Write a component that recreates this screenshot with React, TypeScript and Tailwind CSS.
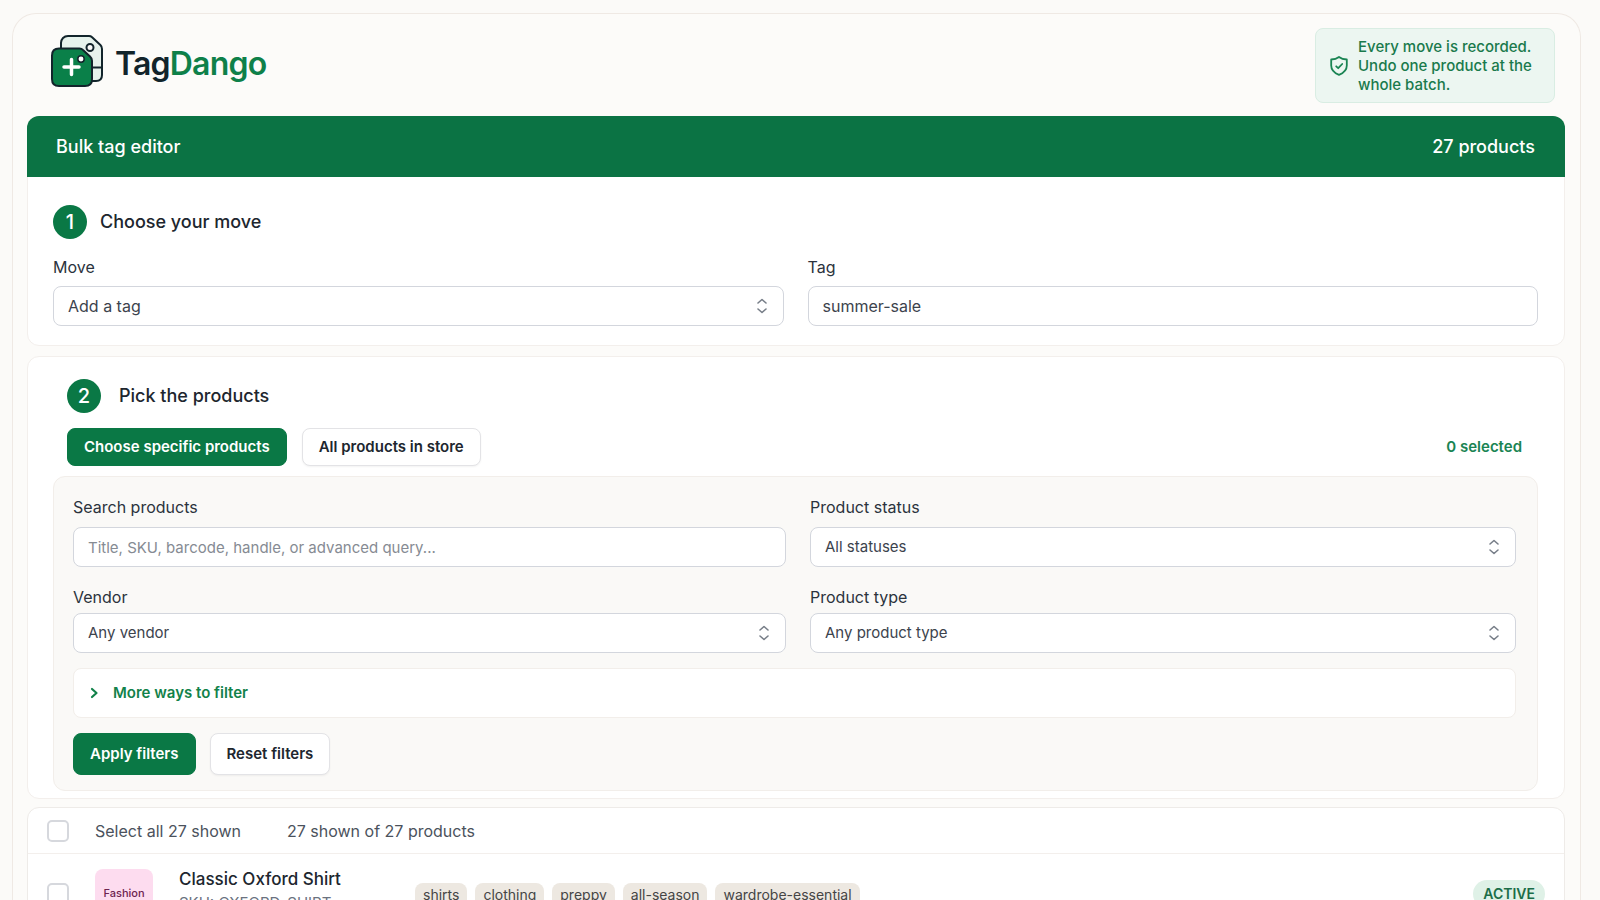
import type { InputHTMLAttributes, ReactNode, SelectHTMLAttributes } from "react"
import clsx from "clsx"

type Product = {
	title: string
	sku: string
	category: string
	tags: string[]
	status: string
}

const products: Product[] = [
	{
		title: "Classic Oxford Shirt",
		sku: "OXFORD-SHIRT",
		category: "Fashion",
		tags: ["shirts", "clothing", "preppy", "all-season", "wardrobe-essential"],
		status: "ACTIVE",
	},
]

function Logo() {
	return (
		<svg width="52" height="52" viewBox="0 0 52 52" fill="none" stroke="#12242b" strokeWidth="2" strokeLinejoin="round" aria-hidden="true">
			<path d="M17 1h21c1.200 0 2.200.4 3.100 1.200l8.300 7.800c1.100 1 1.600 2.200 1.600 4V40c0 4-2.500 6-6 6H16c-4 0-6-2-6-6V8c0-4 3-7 7-7z" fill="#e6f2ec" />
			<path d="M41 32.500h10" />
			<circle cx="39" cy="12.500" r="3.500" fill="#fbfaf8" />
			<path d="M8 13.500h20.500c1.500 0 2.500.4 3.500 1.400l7 6.600c1.300 1.200 2 2.500 2 4.200V44c0 4.500-2.500 7-7 7H8c-4.500 0-7-2.500-7-7V20.500c0-4.500 2.500-7 7-7z" fill="#0a8049" />
			<circle cx="30" cy="24" r="3.200" fill="#fff" strokeWidth="1.500" />
			<path d="M20.500 24.500v15M13 32h15" stroke="#fff" strokeWidth="3.500" strokeLinecap="round" />
		</svg>
	)
}

function ShieldIcon() {
	return (
		<svg className="shrink-0" width="18" height="20" viewBox="0 0 18 20" fill="none" stroke="#1a8453" strokeWidth="1.800" strokeLinecap="round" strokeLinejoin="round" aria-hidden="true">
			<path d="M9 1c2.300 1.700 5 2.400 7.800 2.500V9.500c0 4.500-3.100 7.500-7.800 9.300-4.700-1.800-7.800-4.800-7.800-9.300v-6C4 3.400 6.700 2.700 9 1z" />
			<path d="M6.200 10.300l2 1.900L12.200 8" />
		</svg>
	)
}

function Field({ id, label, children }: { id: string; label: string; children: ReactNode }) {
	return (
		<div className="flex flex-col">
			<label htmlFor={id} className="text-base leading-6 text-[#2b333d]">
				{label}
			</label>
			{children}
		</div>
	)
}

const control =
	"h-10 w-full rounded-lg border border-[#d3d6dd] bg-white px-[14px] text-[#3c434d] placeholder:text-[#868b93] focus:outline-none focus:border-[#0a7d48]"

function TextInput({ className, ...props }: InputHTMLAttributes<HTMLInputElement>) {
	return <input type="text" className={clsx(control, className)} {...props} />
}

function Select({ className, children, ...props }: SelectHTMLAttributes<HTMLSelectElement>) {
	return (
		<div className={clsx("relative", className)}>
			<select className={clsx(control, "appearance-none pr-10")} {...props}>
				{children}
			</select>
			<svg className="pointer-events-none absolute top-3 right-4" width="12" height="16" viewBox="0 0 12 16" fill="none" stroke="#777e88" strokeWidth="1.600" strokeLinecap="round" strokeLinejoin="round" aria-hidden="true">
				<path d="M2 5L6 1.500 10 5M2 11l4 3.500 4-3.500" />
			</svg>
		</div>
	)
}

function Button({ primary, className, children }: { primary?: boolean; className?: string; children: ReactNode }) {
	return (
		<button
			type="button"
			className={clsx(
				"rounded-lg border px-4 text-[15px] font-semibold",
				primary ? "border-[#0a7845] bg-[#0a7845] text-white" : "border-[#e3e3e6] bg-white text-[#20262e] shadow-xs",
				className,
			)}
		>
			{children}
		</button>
	)
}

function StepTitle({ step, className, children }: { step: number; className?: string; children: ReactNode }) {
	return (
		<div className={clsx("flex items-center", className)}>
			<span className="flex size-[34px] items-center justify-center rounded-full bg-[#0a7845] text-xl font-medium text-white">{step}</span>
			<h2 className="text-lg font-medium text-[#20262e]">{children}</h2>
		</div>
	)
}

function Checkbox({ label }: { label: string }) {
	return <input type="checkbox" aria-label={label} className="block size-[22px] shrink-0 appearance-none rounded-[5px] border-2 border-[#d6d8dd] bg-white checked:border-[#0a7845] checked:bg-[#0a7845]" />
}

function ProductRow({ product }: { product: Product }) {
	return (
		<li className="flex items-start pt-[15px] pr-[19px] pb-4 pl-[19px]">
			<div className="pt-[14px]">
				<Checkbox label={`Select ${product.title}`} />
			</div>
			<div className="ml-[26px] flex h-12 w-[58px] items-center justify-center rounded-lg bg-[#fddcef] text-[11px] font-medium text-[#6d2350]">{product.category}</div>
			<div className="ml-[26px] w-[236px]">
				<h3 className="text-[17px] leading-5 font-medium text-[#20262e]">{product.title}</h3>
				<p className="mt-1 text-[15px] leading-5 text-[#6b7280]">SKU: {product.sku}</p>
			</div>
			<ul className="flex flex-1 gap-2 pt-[14px]">
				{product.tags.map((tag) => (
					<li key={tag} className="rounded-lg bg-[#ede8e1] px-2 text-sm leading-6 text-[#454545]">
						{tag}
					</li>
				))}
			</ul>
			<span className="mt-[11px] rounded-full bg-[#dff1e7] px-[10px] text-sm leading-7 font-semibold text-[#1b6d47]">{product.status}</span>
		</li>
	)
}

export default function App() {
	return (
		<div className="h-screen overflow-hidden bg-[#fbfaf8] pt-[13px] pr-[19px] pl-3 font-['Inter','Liberation_Sans',sans-serif]">
			<main className="min-h-screen rounded-t-3xl border border-b-0 border-[#efe9e4] bg-[#fcfbf9] pr-[15px] pl-[14px]">
				<header className="flex items-start justify-between pt-[14px] pr-[10px] pb-[13px] pl-6">
					<a href="#" className="mt-[7px] flex items-center gap-3">
						<Logo />
						<span className="pt-[5px] text-[32px] leading-10 font-semibold tracking-tight text-[#12242b]">
							Tag<span className="text-[#0e8049]">Dango</span>
						</span>
					</a>
					<div className="flex w-[240px] items-center gap-[10px] rounded-lg border border-[#d9ede3] bg-[#ecf6f1] py-2 pl-[14px] text-[15px] leading-[19px] font-medium text-[#1a7a4c]">
						<ShieldIcon />
						<p>
							Every move is recorded.
							<br />
							Undo one product at the
							<br />
							whole batch.
						</p>
					</div>
				</header>

				<section className="rounded-xl border border-[#f3efec] bg-white">
					<div className="-mx-px -mt-px flex h-[61px] items-center justify-between rounded-t-xl bg-[#0b7344] pr-[30px] pl-[29px] text-lg font-medium text-white">
						<h1>Bulk tag editor</h1>
						<span>27 products</span>
					</div>
					<div className="pt-7 pr-[26px] pb-[19px] pl-[25px]">
						<StepTitle step={1} className="gap-[13px]">
							Choose your move
						</StepTitle>
						<div className="mt-4 grid grid-cols-2 gap-x-6 text-base">
							<Field id="move" label="Move">
								<Select id="move" className="mt-[7px]">
									<option>Add a tag</option>
								</Select>
							</Field>
							<Field id="tag" label="Tag">
								<TextInput id="tag" className="mt-[7px]" defaultValue="summer-sale" />
							</Field>
						</div>
					</div>
				</section>

				<section className="mt-[10px] rounded-xl border border-[#f3efec] bg-white pt-[22px] pr-[26px] pb-[7px] pl-[25px]">
					<StepTitle step={2} className="gap-[18px] px-[14px]">
						Pick the products
					</StepTitle>
					<div className="mt-[15px] flex items-center pr-4 pl-[14px]">
						<Button primary className="h-[38px]">
							Choose specific products
						</Button>
						<Button className="ml-[15px] h-[38px]">All products in store</Button>
						<span className="ml-auto text-[15px] font-semibold text-[#1a8453]">0 selected</span>
					</div>

					<form className="mt-[10px] rounded-xl border border-[#f2eeea] bg-[#faf9f7] pt-[18px] pr-[21px] pb-[15px] pl-[19px]">
						<div className="grid grid-cols-[1.01fr_1fr] gap-x-6 gap-y-[18px] text-[15px]">
							<Field id="search" label="Search products">
								<TextInput id="search" className="mt-2" placeholder="Title, SKU, barcode, handle, or advanced query..." />
							</Field>
							<Field id="status" label="Product status">
								<Select id="status" className="mt-2">
									<option>All statuses</option>
								</Select>
							</Field>
							<Field id="vendor" label="Vendor">
								<Select id="vendor" className="mt-1">
									<option>Any vendor</option>
								</Select>
							</Field>
							<Field id="type" label="Product type">
								<Select id="type" className="mt-1">
									<option>Any product type</option>
								</Select>
							</Field>
						</div>
						<button type="button" aria-expanded="false" className="mt-[15px] flex h-[50px] w-full items-center gap-[14px] rounded-lg border border-[#f2eeea] bg-white px-4 text-[15px] font-semibold text-[#12824a]">
							<svg width="9" height="12" viewBox="0 0 9 12" fill="none" stroke="currentColor" strokeWidth="2.200" strokeLinecap="round" strokeLinejoin="round" aria-hidden="true">
								<path d="M2 2l4.500 4L2 10" />
							</svg>
							More ways to filter
						</button>
						<div className="mt-[15px] flex gap-[14px]">
							<Button primary className="h-[42px]">
								Apply filters
							</Button>
							<Button className="h-[42px]">Reset filters</Button>
						</div>
					</form>
				</section>

				<section className="mt-2 rounded-t-xl border border-[#eeebe8] bg-white">
					<div className="flex h-[46px] items-center border-b border-[#f3efec] pl-[19px] text-base text-[#4b525c]">
						<Checkbox label="Select all 27 shown" />
						<span className="ml-[26px]">Select all 27 shown</span>
						<span className="ml-[46px]">27 shown of 27 products</span>
					</div>
					<ul>
						{products.map((product) => (
							<ProductRow key={product.sku} product={product} />
						))}
					</ul>
				</section>
			</main>
		</div>
	)
}
